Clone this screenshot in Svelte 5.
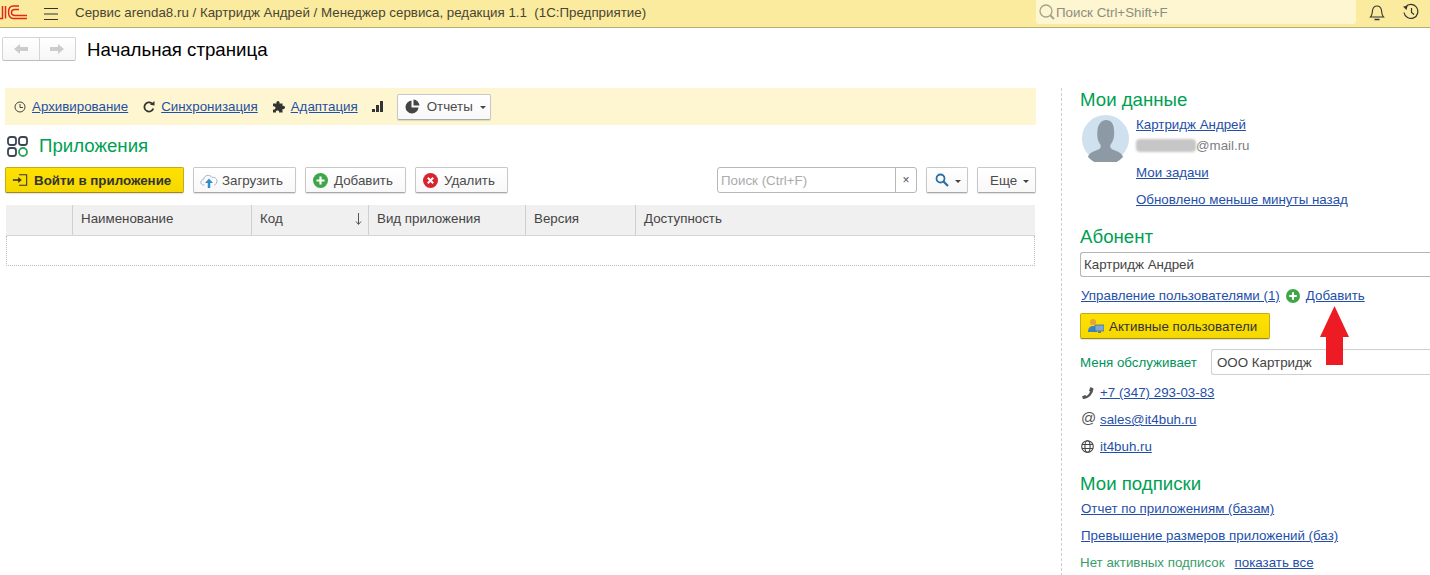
<script lang="ts">
const columns = [
  { label: "", width: 67 },
  { label: "Наименование", width: 179 },
  { label: "Код", width: 117, sorted: true },
  { label: "Вид приложения", width: 157 },
  { label: "Версия", width: 110 },
  { label: "Доступность", width: 398 },
];
</script>

<div class="app">
  <header class="topbar">
    <svg class="logo" width="28" height="27" viewBox="0 0 28 27" fill="none" stroke="#e3261b" stroke-width="1.500">
      <path d="M0 18.500H2.500V6M5.500 6V18.500" />
      <path d="M19 6H13.500Q8.500 6 8.500 12Q8.500 18.500 13.500 18.500H27" />
      <path d="M19 9.500H15Q11.500 9.500 11.500 12.500Q11.500 15.500 15 15.500H27" />
    </svg>
    <svg class="burger" width="16" height="14" viewBox="0 0 16 14" stroke="#333" stroke-width="1.200">
      <path d="M1 1.500H15M1 7H15M1 12.500H15" />
    </svg>
    <span class="app-title">Сервис arenda8.ru / Картридж Андрей / Менеджер сервиса, редакция 1.1&nbsp; (1С:Предприятие)</span>
    <div class="global-search">
      <svg width="18" height="18" viewBox="0 0 18 18" fill="none" stroke="#a5a28f" stroke-width="1.300">
        <circle cx="8" cy="8" r="6" />
        <path d="M12.500 12.500L16 16" stroke-width="2" />
      </svg>
      <span>Поиск Ctrl+Shift+F</span>
    </div>
    <svg class="bell" width="16" height="17" viewBox="0 0 16 17" fill="none" stroke="#333" stroke-width="1.100">
      <path d="M1.500 13 C3.500 11 3 9 3.500 6.500 C4 3.500 6 2 8 2 C10 2 12 3.500 12.500 6.500 C13 9 12.500 11 14.500 13 Z" />
      <path d="M5.500 15.500H10.500" stroke-width="1.500" />
    </svg>
    <svg class="history" width="18" height="18" viewBox="0 0 18 18" fill="none" stroke="#333" stroke-width="1.200">
      <path d="M3.500 4 A7 7 0 1 1 2 9.500" />
      <path d="M1 3.500 L5.500 3 L4.500 7 Z" fill="#333" stroke="none" />
      <path d="M9.500 5V9.500L12 11.500" />
    </svg>
  </header>

  <div class="page-head">
    <div class="nav-buttons">
      <button type="button" class="nav-btn">
        <svg width="14" height="10" viewBox="0 0 14 10" fill="#ccc"><path d="M0 5L6 0V3H14V7H6V10Z" /></svg>
      </button>
      <button type="button" class="nav-btn">
        <svg width="14" height="10" viewBox="0 0 14 10" fill="#ccc"><path d="M14 5L8 0V3H0V7H8V10Z" /></svg>
      </button>
    </div>
    <h1>Начальная страница</h1>
  </div>

  <div class="content">
    <main class="left">
      <div class="band">
        <svg class="band-ic" width="12" height="12" viewBox="0 0 12 12" fill="none" stroke="#444" stroke-width="1">
          <circle cx="6" cy="6" r="5" /><path d="M6 3V6.500H9" />
        </svg>
        <a href="#a" class="first">Архивирование</a>
        <svg class="band-ic sync" width="12" height="12" viewBox="0 0 12 12" fill="none" stroke="#333" stroke-width="1.800">
          <path d="M10.300 7.500A4.600 4.600 0 1 1 9 2.500" />
          <path d="M7 3.800L11.500 4.500V0Z" fill="#333" stroke="none" />
        </svg>
        <a href="#a" class="first">Синхронизация</a>
        <svg class="band-ic puzzle" width="12" height="12" viewBox="0 0 12 12" fill="#333">
          <path d="M0 2.500H3.500C3 1 4 0 5 0C6 0 7 1 6.500 2.500H9.500V5C11 4.500 12 5.500 12 6.500C12 7.500 11 8.500 9.500 8V11.500H6C6.500 10 5.500 9.500 4.500 9.500C3.500 9.500 2.500 10 3 11.500H0V8.500C1.500 9 2.500 8 2.500 7C2.500 6 1.500 5 0 5.500Z" />
        </svg>
        <a href="#a" class="first">Адаптация</a>
        <svg class="band-ic bars" width="12" height="12" viewBox="0 0 12 12" fill="#333">
          <rect x="0" y="8" width="3" height="3" /><rect x="4" y="4" width="3" height="7" /><rect x="8" y="0" width="3" height="11" />
        </svg>
        <button type="button" class="btn reports">
          <svg width="15" height="15" viewBox="0 0 15 15" fill="#444">
            <path d="M6.500 1.500A6.500 6.500 0 1 0 13.500 8.500H6.500Z" /><path d="M8.500 0.500A6.500 6.500 0 0 1 14.500 6.500H8.500Z" />
          </svg>
          Отчеты <i class="caret"></i>
        </button>
      </div>

      <div class="apps-title">
        <svg width="21" height="21" viewBox="0 0 21 21" fill="none" stroke="#3c4556" stroke-width="1.800">
          <rect x="1" y="1" width="8" height="8" rx="2.500" />
          <rect x="12" y="1" width="8" height="8" rx="2.500" />
          <rect x="1" y="12" width="8" height="8" rx="2.500" />
          <circle cx="16" cy="16" r="4" stroke="#2ba35a" />
        </svg>
        <h2>Приложения</h2>
      </div>

      <div class="toolbar">
        <button type="button" class="btn primary enter">
          <svg width="16" height="14" viewBox="0 0 18 14" fill="none" stroke="#333" stroke-width="1.200">
            <path d="M8 1H16.500V13H8" />
            <path d="M1 7H9" stroke-width="1.800" />
            <path d="M7 3.500L11 7L7 10.500Z" fill="#333" stroke="none" />
          </svg>
          Войти в приложение
        </button>
        <button type="button" class="btn upload">
          <svg width="18" height="15" viewBox="0 0 18 15" fill="none">
            <path d="M4.500 12H3.500C0 11.500 0 7 3.500 6.500C4 2 10 1 12 4.500C15.500 3.500 18 7 16.500 10C16 11 15 12 14 12" stroke="#9fb4c7" />
            <path d="M9 15V9" stroke="#2e8fd0" stroke-width="2.500" />
            <path d="M5 10L9 5.500L13 10Z" fill="#2e8fd0" />
          </svg>
          Загрузить
        </button>
        <button type="button" class="btn add">
          <svg width="15" height="15" viewBox="0 0 15 15">
            <circle cx="7.500" cy="7.500" r="7.500" fill="#3fa648" />
            <path d="M7.500 3.500V11.500M3.500 7.500H11.500" stroke="#fff" stroke-width="2.200" />
          </svg>
          Добавить
        </button>
        <button type="button" class="btn remove">
          <svg width="15" height="15" viewBox="0 0 15 15">
            <circle cx="7.500" cy="7.500" r="7.500" fill="#d9232e" />
            <path d="M4.800 4.800L10.200 10.200M10.200 4.800L4.800 10.200" stroke="#fff" stroke-width="2" />
          </svg>
          Удалить
        </button>
        <div class="search-box">
          <span class="placeholder">Поиск (Ctrl+F)</span>
          <span class="clear">×</span>
        </div>
        <button type="button" class="btn lens">
          <svg width="14" height="14" viewBox="0 0 14 14" fill="none" stroke="#2a6ea6" stroke-width="1.800">
            <circle cx="5.500" cy="5.500" r="4" /><path d="M8.500 8.500L13 13" stroke-width="2.200" />
          </svg>
          <i class="caret"></i>
        </button>
        <button type="button" class="btn more">Еще <i class="caret"></i></button>
      </div>

      <div class="table">
        <div class="thead">
          {#each columns as col}
            <div class="th" style="width: {col.width}px">
              {col.label}
              {#if col.sorted}
                <svg class="sort" width="7" height="12" viewBox="0 0 7 12" fill="none" stroke="#555">
                  <path d="M3.500 0V11M1 8.500L3.500 11.500L6 8.500" />
                </svg>
              {/if}
            </div>
          {/each}
        </div>
        <div class="empty-row"></div>
      </div>
    </main>

    <aside class="right">
      <h3>Мои данные</h3>
      <div class="profile">
        <svg class="avatar" width="47" height="47" viewBox="0 0 47 47">
          <circle cx="23.500" cy="23.500" r="23.500" fill="#cfe0ee" />
          <path d="M6 42C7 37 14 36 18 33.500C19 32 19 30 18 29C15 25 15 20 15.500 15C16 9 20 5 24 5C29 5 32 9 32 15C32.500 20 32 25 29 29C28 30 28 32 29 33.500C33 36 40 37 41 42A23.500 23.500 0 0 1 6 42Z" fill="#8d9aa6" />
        </svg>
        <div class="profile-links">
          <a href="#a">Картридж Андрей</a>
          <div class="mail"><span class="blur"></span>@mail.ru</div>
          <a href="#a" class="gap">Мои задачи</a>
          <a href="#a" class="gap">Обновлено меньше минуты назад</a>
        </div>
      </div>

      <h3 class="abonent">Абонент</h3>
      <div class="field wide">Картридж Андрей</div>
      <div class="users">
        <a href="#a">Управление пользователями (1)</a>
        <svg width="14" height="14" viewBox="0 0 15 15">
          <circle cx="7.500" cy="7.500" r="7.500" fill="#3fa648" />
          <path d="M7.500 3.500V11.500M3.500 7.500H11.500" stroke="#fff" stroke-width="2.200" />
        </svg>
        <a href="#a">Добавить</a>
      </div>
      <button type="button" class="btn primary active-users">
        <svg width="16" height="16" viewBox="0 0 16 16">
          <circle cx="5" cy="4" r="3" fill="#e8a33c" />
          <path d="M0 14C0 10 2 8 5 8C8 8 9 9 9 10V14Z" fill="#3b83c4" />
          <rect x="7" y="7" width="9" height="6" fill="#7fa8c9" stroke="#2a6ea6" stroke-width="0.700" />
          <rect x="10" y="13" width="3" height="2" fill="#777" />
        </svg>
        Активные пользователи
      </button>
      <div class="served">
        <span class="served-label">Меня обслуживает</span>
        <div class="field grow">ООО Картридж</div>
      </div>
      <div class="contact">
        <svg width="14" height="14" viewBox="0 0 14 14" fill="#555">
          <path d="M9.500 1L12.500 2.500C12 8 8 12.500 2 13L1 10.500L4 9L5.500 10C7.500 9 8.500 7 9 5.500L8 4.500Z" />
        </svg>
        <a href="#a">+7 (347) 293-03-83</a>
      </div>
      <div class="contact">
        <span class="at">@</span>
        <a href="#a">sales@it4buh.ru</a>
      </div>
      <div class="contact">
        <svg class="globe" width="13" height="13" viewBox="0 0 13 13" fill="none" stroke="#444" stroke-width="1.100">
          <circle cx="6.500" cy="6.500" r="5.800" />
          <ellipse cx="6.500" cy="6.500" rx="2.600" ry="5.800" />
          <path d="M1 4.500H12M1 8.500H12" />
        </svg>
        <a href="#a">it4buh.ru</a>
      </div>

      <h3 class="subs">Мои подписки</h3>
      <a href="#a" class="sub-link">Отчет по приложениям (базам)</a>
      <a href="#a" class="sub-link next">Превышение размеров приложений (баз)</a>
      <div class="no-subs">
        <span>Нет активных подписок</span>
        <a href="#a">показать все</a>
      </div>

      <svg class="arrow" width="29" height="59" viewBox="0 0 29 59" fill="#ed1c24">
        <path d="M14.500 0L29 31H23V59H6V31H0Z" />
      </svg>
    </aside>
  </div>
</div>

<style>
  :global(body) {
    margin: 0;
    background: #fff;
  }

  .app {
    width: 1430px;
    height: 575px;
    overflow: hidden;
    font-family: "Liberation Sans", Arial, sans-serif;
    font-size: 13.33px;
    color: #4b4b4b;
  }

  a {
    color: #1f4fa8;
    text-decoration: underline;
  }

  h1, h2, h3 {
    margin: 0;
    font-weight: 400;
  }

  .topbar {
    height: 27px;
    border-bottom: 1px solid #b5ad78;
    background: #fbeb9e;
    display: flex;
    align-items: center;
    position: relative;
  }

  .logo {
    flex-shrink: 0;
  }

  .burger {
    margin-left: 15px;
    flex-shrink: 0;
  }

  .app-title {
    margin-left: 16px;
    color: #4a4534;
    width: 961px;
    white-space: nowrap;
    flex-shrink: 0;
    position: relative;
    top: -1px;
  }

  .global-search {
    width: 320px;
    height: 24px;
    margin-bottom: 3px;
    border-radius: 0 0 3px 3px;
    background: #fdf6d0;
    display: flex;
    align-items: center;
    padding-left: 2px;
    box-sizing: border-box;
    color: #8f8d80;
    flex-shrink: 0;
  }

  .bell {
    margin-left: 13px;
    margin-bottom: 3px;
    flex-shrink: 0;
  }

  .history {
    margin-left: 17px;
    margin-bottom: 3px;
    flex-shrink: 0;
  }

  .page-head {
    height: 60px;
    display: flex;
    align-items: flex-start;
    padding: 9px 0 0 2px;
    box-sizing: border-box;
  }

  .nav-buttons {
    display: flex;
    width: 74px;
    height: 24px;
    box-sizing: border-box;
    border: 1px solid #d4d4d4;
    border-bottom-color: #bdbdbd;
    border-radius: 2px;
    background: linear-gradient(#fff, #f6f6f6);
  }

  .nav-btn {
    flex: 1;
    border: 0;
    background: none;
    padding: 0;
    display: flex;
    align-items: center;
    justify-content: center;
  }

  .nav-btn + .nav-btn {
    border-left: 1px solid #d4d4d4;
  }

  h1 {
    font-size: 18.67px;
    line-height: 26px;
    color: #000;
    margin-left: 11px;
  }

  .content {
    display: flex;
    height: 488px;
  }

  .left {
    width: 1061px;
    flex-shrink: 0;
    padding: 0 0 0 5px;
    box-sizing: border-box;
  }

  .band {
    width: 1031px;
    height: 37px;
    background: #fdf6d0;
    display: flex;
    align-items: center;
    padding-left: 9px;
    box-sizing: border-box;
  }

  .band-ic {
    flex-shrink: 0;
  }

  .first {
    margin-left: 6px;
  }

  .sync {
    margin-left: 15px;
  }

  .puzzle {
    margin-left: 15px;
  }

  .bars {
    margin-left: 14px;
  }

  .btn {
    height: 26px;
    box-sizing: border-box;
    border: 1px solid #c8c8c8;
    border-bottom-color: #a8a8a8;
    border-radius: 2px;
    background: linear-gradient(#fff, #f8f8f8);
    box-shadow: 0 1px 1px rgba(0, 0, 0, 0.12);
    font-family: inherit;
    font-size: 13.33px;
    color: #4b4b4b;
    display: flex;
    align-items: center;
    padding: 0;
    gap: 6px;
    flex-shrink: 0;
  }

  .reports {
    width: 94px;
    margin-left: 13px;
    padding-left: 7px;
    gap: 7px;
  }

  .caret {
    display: inline-block;
    width: 0;
    height: 0;
    border-left: 3px solid transparent;
    border-right: 3px solid transparent;
    border-top: 3px solid #444;
    margin-top: 2px;
  }

  .apps-title {
    height: 42px;
    display: flex;
    align-items: center;
    padding-left: 2px;
    gap: 11px;
  }

  h2, h3 {
    font-size: 18.67px;
    color: #00a052;
  }

  .toolbar {
    display: flex;
    align-items: center;
    width: 1031px;
  }

  .primary {
    background: linear-gradient(#ffe100, #f5d800);
    border-color: #c6ab18;
    border-bottom-color: #a08a10;
    color: #333;
  }

  .enter {
    width: 179px;
    padding-left: 6px;
    font-weight: 700;
  }

  .upload {
    width: 103px;
    margin-left: 9px;
    padding-left: 6px;
    gap: 4px;
  }

  .add {
    width: 101px;
    margin-left: 9px;
    padding-left: 7px;
  }

  .remove {
    width: 93px;
    margin-left: 9px;
    padding-left: 7px;
  }

  .search-box {
    width: 200px;
    height: 26px;
    margin-left: 209px;
    box-sizing: border-box;
    border: 1px solid #b8b8b8;
    border-radius: 3px;
    display: flex;
    align-items: center;
  }

  .placeholder {
    flex: 1;
    padding-left: 3px;
    color: #ababab;
  }

  .clear {
    width: 20px;
    height: 100%;
    border-left: 1px solid #b8b8b8;
    display: flex;
    align-items: center;
    justify-content: center;
    color: #555;
    font-size: 12px;
  }

  .lens {
    width: 42px;
    margin-left: 9px;
    padding-left: 8px;
  }

  .more {
    width: 59px;
    margin-left: 9px;
    padding-left: 12px;
  }

  .table {
    width: 1029px;
    margin: 12px 0 0 1px;
    box-sizing: border-box;
  }

  .thead {
    display: flex;
    height: 30px;
    background: #f0f0f0;
    border-bottom: 1px solid #d6d6d6;
    box-sizing: content-box;
  }

  .th {
    box-sizing: border-box;
    border-right: 1px solid #cfcfcf;
    padding-left: 8px;
    line-height: 28px;
    color: #444;
    position: relative;
    flex-shrink: 0;
  }

  .th:last-child {
    border-right: 0;
  }

  .sort {
    position: absolute;
    right: 6px;
    top: 8px;
  }

  .empty-row {
    height: 30px;
    box-sizing: border-box;
    border: 1px dotted #bdbdbd;
    border-top: 0;
  }

  .right {
    flex: 1;
    min-width: 0;
    border-left: 1px dashed #cfcfcf;
    padding: 1px 0 0 18px;
    position: relative;
    overflow: hidden;
  }

  .right h3 {
    line-height: 22px;
  }

  .profile {
    display: flex;
    gap: 7px;
    padding-left: 2px;
    margin-top: 4px;
  }

  .avatar {
    flex-shrink: 0;
  }

  .profile-links {
    display: flex;
    flex-direction: column;
    align-items: flex-start;
    line-height: 15px;
    padding-top: 2px;
  }

  .mail {
    display: flex;
    align-items: center;
    margin-top: 6px;
    color: #808080;
  }

  .blur {
    width: 60px;
    height: 13px;
    background: #c6c6c6;
    border-radius: 4px;
    filter: blur(1px);
  }

  .gap {
    margin-top: 12px;
  }

  .abonent {
    margin-top: 19px;
  }

  .field {
    height: 25px;
    box-sizing: border-box;
    border: 1px solid #b5b5b5;
    border-right: 0;
    border-radius: 3px 0 0 3px;
    display: flex;
    align-items: center;
    padding-left: 3px;
    color: #444;
  }

  .wide {
    margin-top: 4px;
    width: 360px;
  }

  .users {
    display: flex;
    align-items: center;
    margin: 11px 0 0 1px;
    height: 15px;
    gap: 6px;
  }

  .active-users {
    width: 190px;
    margin-top: 10px;
    padding-left: 7px;
    gap: 5px;
  }

  .served {
    display: flex;
    align-items: center;
    margin-top: 10px;
  }

  .served-label {
    width: 131px;
    color: #00935a;
    flex-shrink: 0;
  }

  .grow {
    flex: 1;
    height: 26px;
    padding-left: 5px;
    border-color: #cfcfcf;
  }

  .contact {
    display: flex;
    align-items: center;
    height: 15px;
    gap: 5px;
    padding-left: 1px;
    margin-top: 12px;
  }

  .served + .contact {
    margin-top: 10px;
  }

  .globe {
    margin-right: 1px;
  }

  .at {
    width: 14px;
    font-size: 15px;
    line-height: 15px;
    color: #555;
    position: relative;
    top: -2px;
  }

  .subs {
    margin-top: 19px;
  }

  .sub-link {
    display: block;
    margin: 6px 0 0 1px;
    line-height: 15px;
  }

  .next {
    margin-top: 12px;
  }

  .no-subs {
    display: flex;
    gap: 10px;
    margin-top: 12px;
    line-height: 15px;
    color: #3a9c6a;
  }

  .arrow {
    position: absolute;
    left: 258px;
    top: 218px;
  }
</style>
